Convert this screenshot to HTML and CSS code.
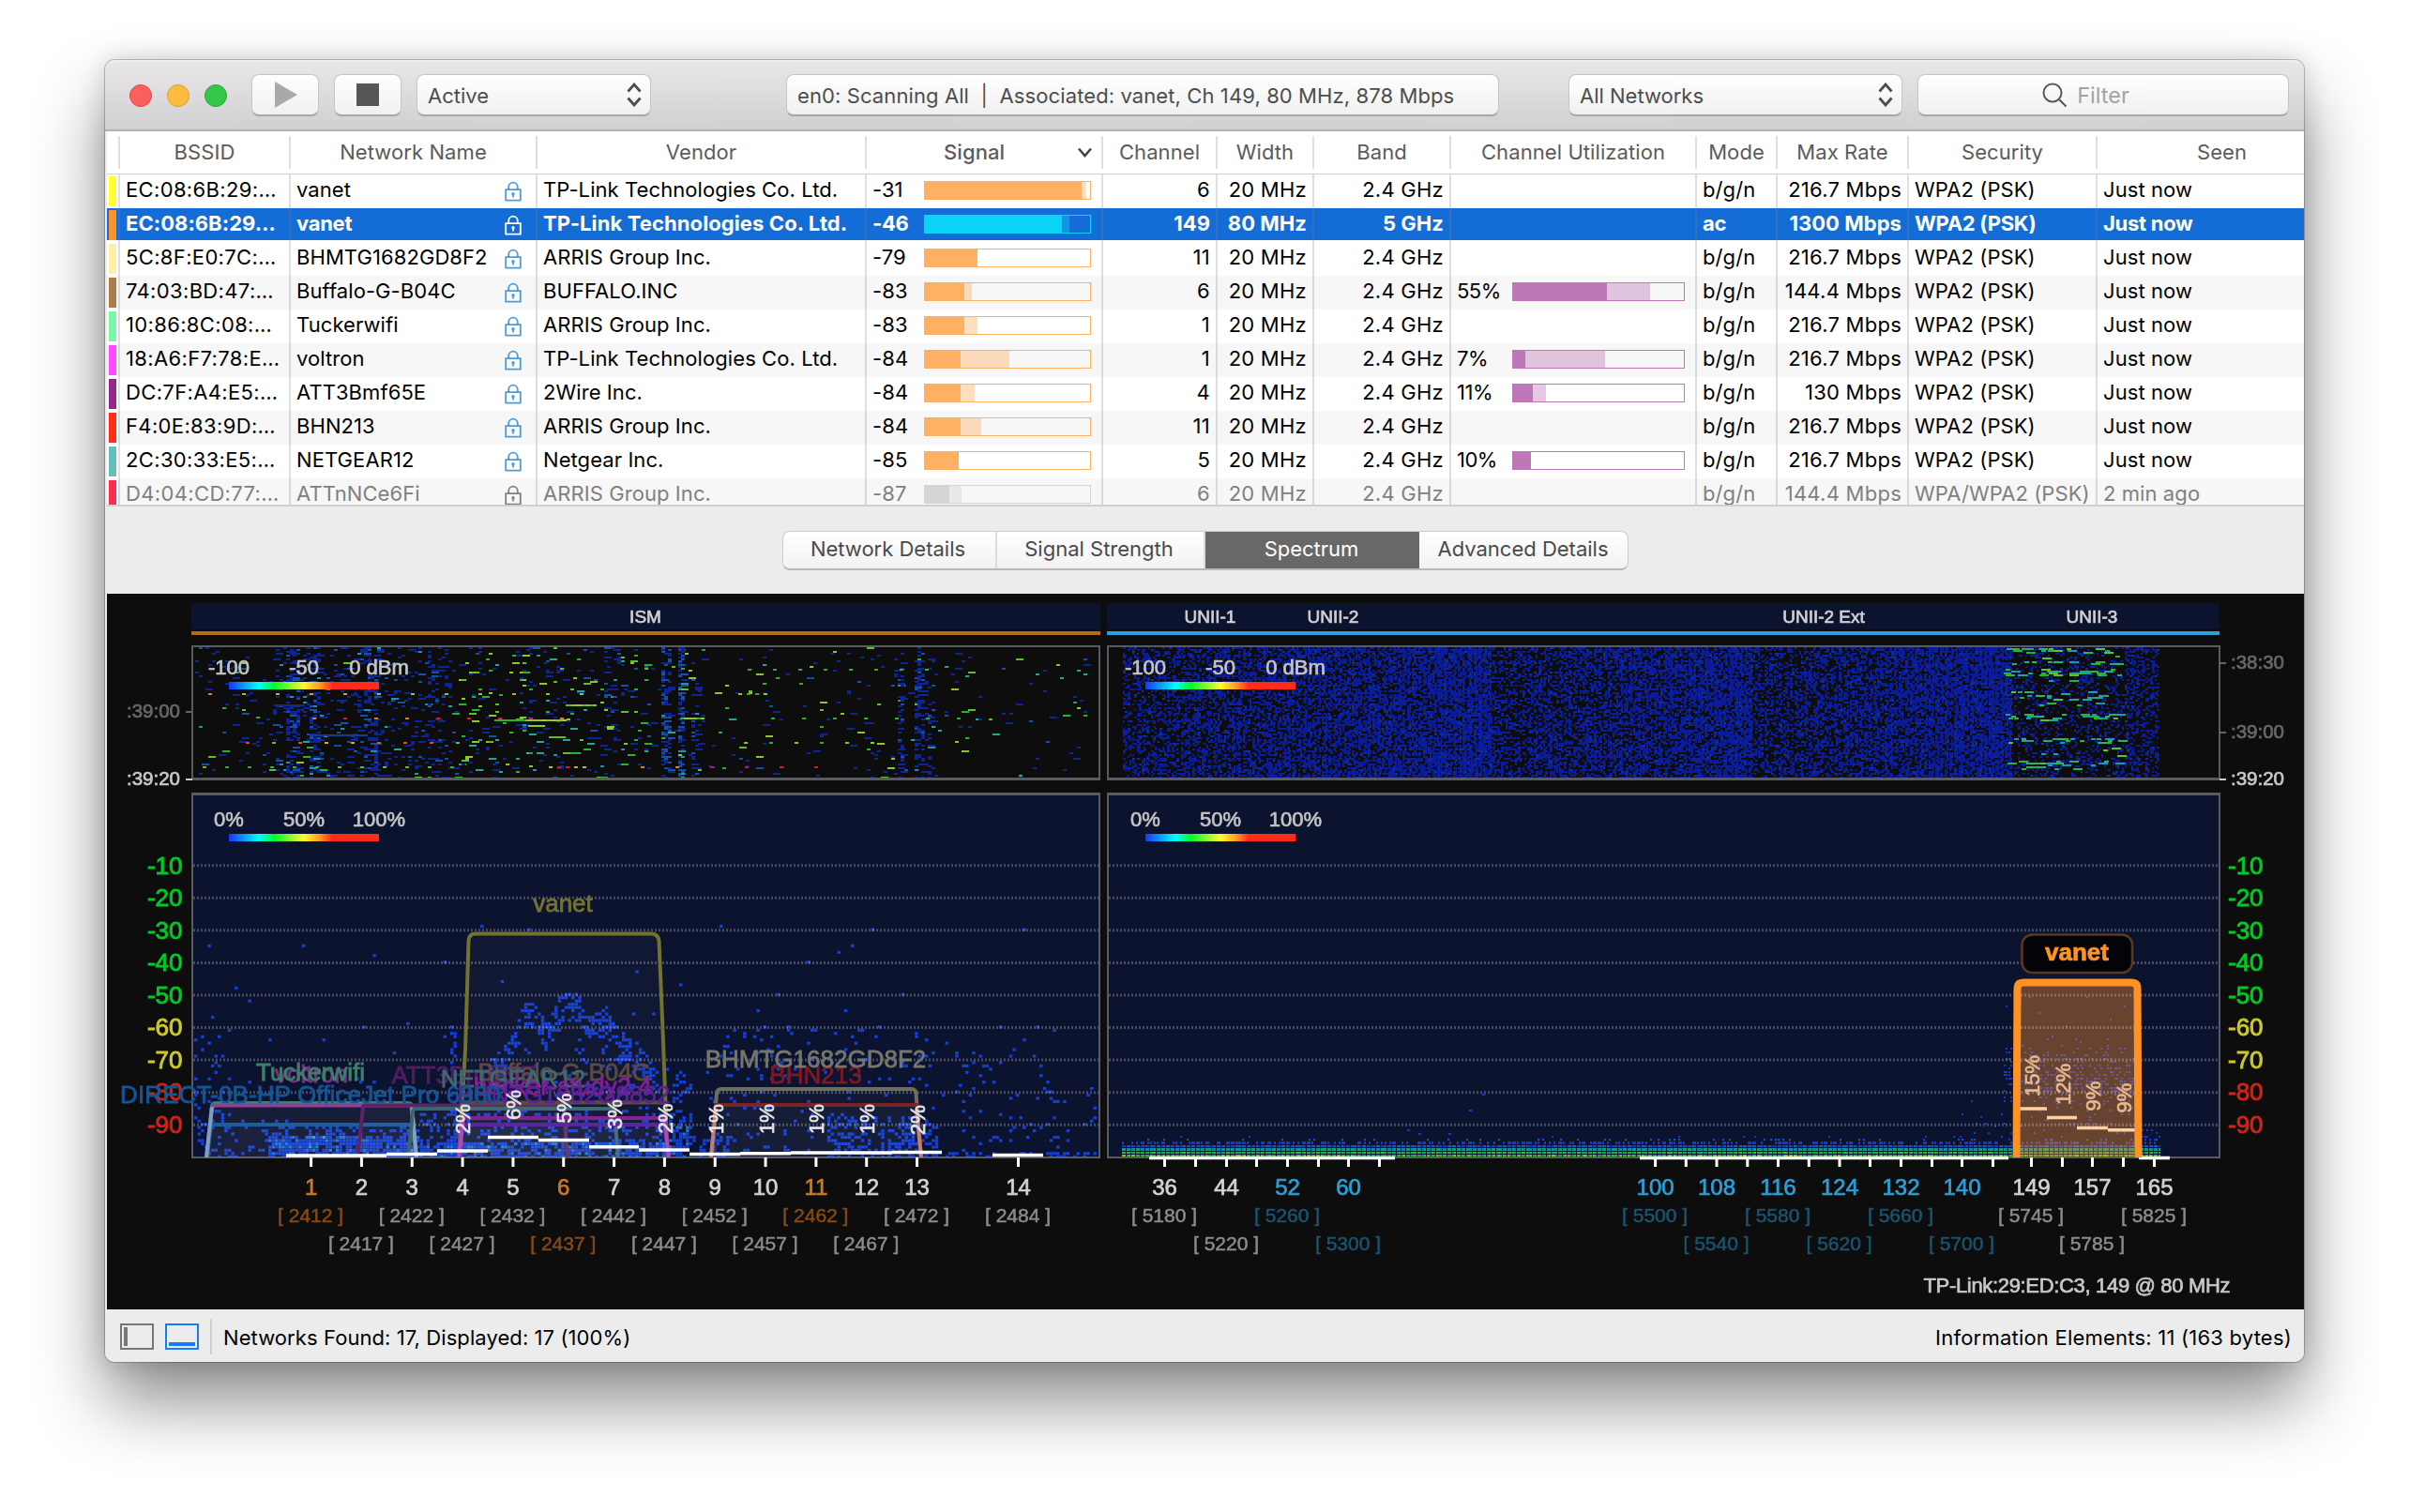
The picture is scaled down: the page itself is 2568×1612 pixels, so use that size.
FILE: index.html
```html
<!DOCTYPE html>
<html lang="en">
<head>
<meta charset="utf-8">
<title>Wi-Fi Scanner</title>
<link rel="stylesheet" href="styles.css">
</head>
<body>
<svg class="defs" width="0" height="0" aria-hidden="true">
  <symbol id="lock" viewBox="0 0 18 22"><path d="M4.2 9V6.5a4.8 4.8 0 0 1 9.6 0V9M1.2 9.2h15.6v11.4H1.2zM9 13v4.6" fill="none" stroke="currentColor" stroke-width="1.8"/><circle cx="9" cy="13.8" r="1.7" fill="currentColor"/></symbol>
  <symbol id="updown" viewBox="0 0 16 26"><path d="M1.5 9.5 8 2l6.500 7.500M1.500 16.500 8 24l6.500-7.500" fill="none" stroke="currentColor" stroke-width="2.800"/></symbol>
</svg>
<main class="window">
  <header class="toolbar">
    <div class="lights"><i class="red"></i><i class="amber"></i><i class="green"></i></div>
    <button class="ctl ctl-play"><svg width="24" height="28"><path d="M0 0 24 14 0 28z" fill="#a9a9a9"/></svg></button>
    <button class="ctl ctl-stop"><svg width="24" height="24"><path d="M0 0h24v24H0z" fill="#565656"/></svg></button>
    <div class="ctl popup popup-active"><span>Active</span><svg width="16" height="26"><use href="#updown"/></svg></div>
    <div class="ctl info"><span>en0: Scanning All&nbsp; |&nbsp; Associated: vanet, Ch 149, 80 MHz, 878 Mbps</span></div>
    <div class="ctl popup popup-net"><span>All Networks</span><svg width="16" height="26"><use href="#updown"/></svg></div>
    <div class="ctl search"><svg width="27" height="27"><circle cx="11" cy="11" r="9.500" fill="none" stroke="#5a5a5a" stroke-width="2"/><path d="m18 18 7.500 7.500" stroke="#5a5a5a" stroke-width="2.200"/></svg><span>Filter</span></div>
  </header>

  <section class="table">
    <div class="row head">
      <span></span><span>BSSID</span><span>Network Name</span><span>Vendor</span>
      <span class="sorted">Signal<svg width="15" height="11"><path d="M1 1.500 7.500 9 14 1.500" fill="none" stroke="#444" stroke-width="2.600"/></svg></span>
      <span>Channel</span><span>Width</span><span>Band</span><span>Channel Utilization</span><span>Mode</span><span>Max Rate</span><span>Security</span><span class="seen">Seen</span>
    </div>
    <div class="rows">
      <div class="row"><span class="sw"><i style="background:#ffff2e"></i></span><span class="mac">EC:08:6B:29:…</span><span class="name">vanet<svg><use href="#lock"/></svg></span><span>TP-Link Technologies Co. Ltd.</span><span class="sig">-31<b class="bar"><i style="width:98%"></i><u style="width:95%"></u></b></span><span class="r">6</span><span class="r">20 MHz</span><span class="r">2.4 GHz</span><span></span><span>b/g/n</span><span class="r">216.7 Mbps</span><span>WPA2 (PSK)</span><span>Just now</span></div>
      <div class="row sel"><span class="sw"><i style="background:#ff9224"></i></span><span class="mac">EC:08:6B:29…</span><span class="name">vanet<svg><use href="#lock"/></svg></span><span class="vendor">TP-Link Technologies Co. Ltd.</span><span class="sig">-46<b class="bar"><i style="width:87.500%"></i><u style="width:83%"></u></b></span><span class="r">149</span><span class="r">80 MHz</span><span class="r">5 GHz</span><span></span><span>ac</span><span class="r">1300 Mbps</span><span>WPA2 (PSK)</span><span>Just now</span></div>
      <div class="row"><span class="sw"><i style="background:#fff0a8"></i></span><span class="mac">5C:8F:E0:7C:…</span><span class="name">BHMTG1682GD8F2<svg><use href="#lock"/></svg></span><span>ARRIS Group Inc.</span><span class="sig">-79<b class="bar"><u style="width:32%"></u></b></span><span class="r">11</span><span class="r">20 MHz</span><span class="r">2.4 GHz</span><span></span><span>b/g/n</span><span class="r">216.7 Mbps</span><span>WPA2 (PSK)</span><span>Just now</span></div>
      <div class="row alt"><span class="sw"><i style="background:#a97c4a"></i></span><span class="mac">74:03:BD:47:…</span><span class="name">Buffalo-G-B04C<svg><use href="#lock"/></svg></span><span>BUFFALO.INC</span><span class="sig">-83<b class="bar"><i style="width:28.500%"></i><u style="width:24%"></u></b></span><span class="r">6</span><span class="r">20 MHz</span><span class="r">2.4 GHz</span><span class="util">55%<b class="bar"><i style="width:80%"></i><u style="width:55%"></u></b></span><span>b/g/n</span><span class="r">144.4 Mbps</span><span>WPA2 (PSK)</span><span>Just now</span></div>
      <div class="row"><span class="sw"><i style="background:#7bf7a8"></i></span><span class="mac">10:86:8C:08:…</span><span class="name">Tuckerwifi<svg><use href="#lock"/></svg></span><span>ARRIS Group Inc.</span><span class="sig">-83<b class="bar"><i style="width:32%"></i><u style="width:24%"></u></b></span><span class="r">1</span><span class="r">20 MHz</span><span class="r">2.4 GHz</span><span></span><span>b/g/n</span><span class="r">216.7 Mbps</span><span>WPA2 (PSK)</span><span>Just now</span></div>
      <div class="row alt"><span class="sw"><i style="background:#ff4cff"></i></span><span class="mac">18:A6:F7:78:E…</span><span class="name">voltron<svg><use href="#lock"/></svg></span><span>TP-Link Technologies Co. Ltd.</span><span class="sig">-84<b class="bar"><i style="width:51%"></i><u style="width:21.800%"></u></b></span><span class="r">1</span><span class="r">20 MHz</span><span class="r">2.4 GHz</span><span class="util">7%<b class="bar"><i style="width:54%"></i><u style="width:7%"></u></b></span><span>b/g/n</span><span class="r">216.7 Mbps</span><span>WPA2 (PSK)</span><span>Just now</span></div>
      <div class="row"><span class="sw"><i style="background:#93268f"></i></span><span class="mac">DC:7F:A4:E5:…</span><span class="name">ATT3Bmf65E<svg><use href="#lock"/></svg></span><span>2Wire Inc.</span><span class="sig">-84<b class="bar"><i style="width:30%"></i><u style="width:21.800%"></u></b></span><span class="r">4</span><span class="r">20 MHz</span><span class="r">2.4 GHz</span><span class="util">11%<b class="bar"><i style="width:19%"></i><u style="width:11.500%"></u></b></span><span>b/g/n</span><span class="r">130 Mbps</span><span>WPA2 (PSK)</span><span>Just now</span></div>
      <div class="row alt"><span class="sw"><i style="background:#ff2d16"></i></span><span class="mac">F4:0E:83:9D:…</span><span class="name">BHN213<svg><use href="#lock"/></svg></span><span>ARRIS Group Inc.</span><span class="sig">-84<b class="bar"><i style="width:34%"></i><u style="width:21.800%"></u></b></span><span class="r">11</span><span class="r">20 MHz</span><span class="r">2.4 GHz</span><span></span><span>b/g/n</span><span class="r">216.7 Mbps</span><span>WPA2 (PSK)</span><span>Just now</span></div>
      <div class="row"><span class="sw"><i style="background:#65beb7"></i></span><span class="mac">2C:30:33:E5:…</span><span class="name">NETGEAR12<svg><use href="#lock"/></svg></span><span>Netgear Inc.</span><span class="sig">-85<b class="bar"><u style="width:20.600%"></u></b></span><span class="r">5</span><span class="r">20 MHz</span><span class="r">2.4 GHz</span><span class="util">10%<b class="bar"><u style="width:10.500%"></u></b></span><span>b/g/n</span><span class="r">216.7 Mbps</span><span>WPA2 (PSK)</span><span>Just now</span></div>
      <div class="row alt old"><span class="sw"><i style="background:#ff2c50"></i></span><span class="mac">D4:04:CD:77:…</span><span class="name">ATTnNCe6Fi<svg><use href="#lock"/></svg></span><span>ARRIS Group Inc.</span><span class="sig">-87<b class="bar"><i style="width:22%"></i><u style="width:15%"></u></b></span><span class="r">6</span><span class="r">20 MHz</span><span class="r">2.4 GHz</span><span></span><span>b/g/n</span><span class="r">144.4 Mbps</span><span>WPA/WPA2 (PSK)</span><span>2 min ago</span></div>
    </div>
  </section>

  <nav class="tabs"><div class="segments"><span>Network Details</span><span>Signal Strength</span><span class="on">Spectrum</span><span>Advanced Details</span></div></nav>

  <section class="chart">
    <canvas id="noise" width="2342" height="763"></canvas>
    <svg class="plot" id="plot" viewBox="114 633 2342 763" width="2342" height="763">
      <defs>
        <linearGradient id="heat"><stop offset="0" stop-color="#1437ff"/><stop offset=".2" stop-color="#00ffff"/><stop offset=".3" stop-color="#00fa30"/><stop offset=".5" stop-color="#fff92e"/><stop offset=".6" stop-color="#ff9f26"/><stop offset=".69" stop-color="#ff2a1a"/></linearGradient>
      </defs>
      <path d="M204 675H1173" stroke="#b5691c" stroke-width="4"/>
      <path d="M1180 675H2366" stroke="#2b9fd8" stroke-width="4"/>
      <g class="band"><text x="688" y="663.500">ISM</text><text x="1290" y="663.500">UNII-1</text><text x="1421" y="663.500">UNII-2</text><text x="1944" y="663.500">UNII-2 Ext</text><text x="2230" y="663.500">UNII-3</text></g>
      <g class="frame"><path d="M205 689H1172V830.500H205zM1181 689H2366V830.500H1181zM205 846.500H1172V1234H205zM1181 846.500H2366V1234H1181z"/><path d="M204 830.500H1173M1180 830.500H2367M204 846.500H1173M1180 846.500H2367" stroke-width="3"/></g>
      <g id="grid" class="grid"></g>

      <g class="legend">
        <text x="244" y="719">-100</text><text x="324" y="719">-50</text><text x="404" y="719">0 dBm</text>
        <text x="1221" y="719">-100</text><text x="1301" y="719">-50</text><text x="1381" y="719">0 dBm</text>
        <text x="244" y="881">0%</text><text x="324" y="881">50%</text><text x="404" y="881">100%</text>
        <text x="1221" y="881">0%</text><text x="1301" y="881">50%</text><text x="1381" y="881">100%</text>
        <rect x="244" y="727" width="160" height="8"/><rect x="1221" y="727" width="160" height="8"/>
        <rect x="244" y="889" width="160" height="8"/><rect x="1221" y="889" width="160" height="8"/>
      </g>
      <g class="time">
        <path d="M198 759h6M2366 707h7M2366 781h7" stroke="#666"/><path d="M198 831h7M2366 831h7" stroke="#ccc"/>
        <g class="e"><text x="192" y="765">:39:00</text><text class="now" x="192" y="837">:39:20</text></g>
        <text x="2378" y="713">:38:30</text><text x="2378" y="787">:39:00</text><text class="now" x="2378" y="837">:39:20</text>
      </g>
      <g id="dbm" class="dbm"></g>

      <g class="ap">
        <path d="M221 1234 226 1180Q226 1176 230 1176H435Q439 1176 439 1180L444 1234" stroke="#3f8068"/>
        <path d="M220 1234 225.500 1182Q226 1178.500 230 1178.500H435Q439 1178.500 439 1182L443 1234" stroke="#8f3f9a"/>
        <path d="M220 1234 225 1201Q225 1199 230 1199H435Q439 1199 440 1201L444 1234" stroke="#1d5f9e"/>
        <path d="M220 1234 226 1180M444 1234 439 1180" stroke="#7d9fc0" stroke-width="3"/>
        <path d="M381 1234 387 1180Q387 1178.500 390 1178.500H598Q601 1178.500 601 1182L605 1234" stroke="#5c2467"/>
        <path d="M435 1234 440 1186Q440 1182 444 1182H651Q655 1182 655 1186L659 1234" stroke="#3b6570"/>
        <path d="M492 1175.500H712" stroke="#5a4a35"/>
        <path d="M489 1234 496 1120 499.500 1003Q500 995.500 507 995.500H694Q701.500 995.500 702.500 1003L707 1110 711.500 1234" stroke="#74722f"/>
        <path d="M489 1234 493 1196Q493 1192 497 1192H704Q708 1192 709 1196L713 1234" stroke="#832391"/>
        <path d="M489 1234 493 1203Q493 1199 497 1199H704Q708 1199 709 1203L713 1234" stroke="#5c259f"/>
        <path d="M489 1234 494 1192M713 1234 708 1192" stroke="#b047c0"/>
        <path d="M758 1234 764 1166Q764.500 1161 769 1161H972Q976 1161 976.500 1166L982 1234" stroke="#6c6e60"/>
        <path d="M758 1234 763 1178H977L982 1234" stroke="#7c2328"/>
        <path d="M758 1234 763 1182M982 1234 977 1182" stroke="#c08070"/>
      </g>
      <g class="ssid">
        <text x="600" y="972" color="#75732f">vanet</text>
        <text x="332" y="1154" color="#7a2f88">voltron</text>
        <text x="331" y="1151.500" color="#3f8068">Tuckerwifi</text>
        <text x="494.500" y="1154.500" color="#521e63">ATT3Bmf65E</text>
        <text x="601" y="1151.500" color="#5e4a42">Buffalo-G-B04C</text>
        <text x="547" y="1159" color="#3f6a70">NETGEAR12</text>
        <text x="600" y="1167" color="#8a1c93" textLength="190">hecker-study2.4</text>
        <text x="601" y="1176" color="#5a2399">BHNTG1682G8852</text>
        <text x="331" y="1175.500" color="#155596" textLength="406">DIRECT-0B-HP OfficeJet Pro 6960</text>
        <text x="869.500" y="1155" color="#7c1a22">BHN213</text>
        <text x="869.500" y="1137.500" color="#76776c">BHMTG1682GD8F2</text>
      </g>
      <g class="use"><path d="M305 1232H412M412 1230.500H466M466 1227H520M520 1212.500H574M574 1215.500H628M628 1222.800H681M681 1226H735M735 1230.500H789M789 1229.700H843M843 1229H951M951 1228.500H1004M1058 1231.500H1112M1225 1234.500H1487M1748 1234.500H2141M2280 1234.500H2313"/></g>
      <g class="pct">
        <text transform="translate(501 1209) rotate(-90)">2%</text><text transform="translate(555 1194) rotate(-90)">6%</text><text transform="translate(609 1197.500) rotate(-90)">5%</text><text transform="translate(662.500 1204) rotate(-90)">3%</text><text transform="translate(716.500 1208.500) rotate(-90)">2%</text><text transform="translate(770.500 1209) rotate(-90)">1%</text><text transform="translate(824.500 1209) rotate(-90)">1%</text><text transform="translate(878 1209) rotate(-90)">1%</text><text transform="translate(932 1209) rotate(-90)">1%</text><text transform="translate(986 1210) rotate(-90)">2%</text>
        <g class="hot"><text transform="translate(2173.500 1169) rotate(-90)">15%</text><text transform="translate(2206.500 1178) rotate(-90)">12%</text><text transform="translate(2239 1184.500) rotate(-90)">9%</text><text transform="translate(2272 1186.500) rotate(-90)">9%</text></g>
      </g>
      <path d="M2153 1182H2182M2182 1191.500H2214M2214 1202.500H2247M2247 1204.700H2276" stroke="#ffd0a2" stroke-width="3.500"/>
      <path d="M2149.500 1234 2150.500 1054Q2150.500 1047.500 2157 1047.500H2272Q2278.500 1047.500 2278.500 1054L2279.500 1234" fill="none" stroke="#ff9224" stroke-width="8"/>
      <rect x="2155.500" y="996.500" width="117.500" height="40.500" rx="11" fill="#03040a" stroke="#5c381c" stroke-width="2.500"/>
      <text class="badge" x="2214" y="1024">vanet</text>
      <g id="axis" class="axis"></g>
      <text class="foot" x="2377.500" y="1378" textLength="327">TP-Link:29:ED:C3, 149 @ 80 MHz</text>
    </svg>
  </section>

  <footer class="status">
    <svg width="36" height="28"><rect x="1" y="1" width="34" height="26" fill="none" stroke="#777" stroke-width="2"/><path d="M4 4h4v20H4z" fill="#777"/></svg>
    <svg width="36" height="28"><rect x="1" y="1" width="34" height="26" fill="none" stroke="#147bff" stroke-width="2"/><path d="M4 20h28v4H4z" fill="#147bff"/></svg>
    <i class="rule"></i>
    <span class="found">Networks Found: 17, Displayed: 17 (100%)</span>
    <span class="elements">Information Elements: 11 (163 bytes)</span>
  </footer>
</main>
<script src="chart.js"></script>
</body>
</html>
```

FILE: styles.css
```css
* { box-sizing: border-box; }
html, body { margin: 0; background: #fff; }
body { height: 1612px; overflow: hidden; padding: 64px 112px; font: 22px/1 Inter, "Liberation Sans", sans-serif; color: #000; }
.defs { position: absolute; }
.window { width: 2344px; height: 1388px; border-radius: 10px; overflow: hidden; background: #ececec; display: flex; flex-direction: column;
  box-shadow: 0 0 0 1px rgba(0,0,0,.22), 0 0 26px rgba(0,0,0,.16), 0 42px 76px rgba(0,0,0,.46); }

.toolbar { height: 76px; flex: none; display: flex; align-items: flex-start; padding-top: 15px; background: linear-gradient(#f4f3f4 0, #e8e6e8 3px, #d1cfd1 100%); border-bottom: 2px solid #b3b1b3; color: #4d4d4d; }
.lights { display: flex; gap: 16px; width: 156px; padding: 11px 0 0 26px; }
.lights i { width: 24px; height: 24px; border-radius: 50%; }
.red { background: #fc605c; border: 1px solid #e0443e; }
.amber { background: #fdbc40; border: 1px solid #dfa023; }
.green { background: #34c84a; border: 1px solid #1daa30; }
.ctl { height: 45px; border-radius: 8px; border: 1px solid #c6c4c6; border-bottom: 2px solid #a8a6a8; background: linear-gradient(#fff, #f0f0f0); display: flex; align-items: center; justify-content: center; padding: 0; color: inherit; font: inherit; white-space: pre; }
.ctl span { padding-top: 2px; }
.ctl-play { width: 72px; margin-right: 16px; padding-left: 2px; }
.ctl-stop { width: 72px; margin-right: 16px; }
.popup { justify-content: space-between; padding: 0 9px 0 11px; }
.popup-active { width: 250px; margin-right: 144px; }
.info { width: 760px; margin-right: 74px; justify-content: flex-start; padding-left: 11px; letter-spacing: .1px; }
.popup-net { width: 356px; margin-right: 16px; }
.search { width: 396px; gap: 10px; color: #a3a3a3; font-size: 23.500px; padding-right: 37px; }

.table { height: 400px; flex: none; margin-left: 2px; background: #fff; overflow: hidden; border-bottom: 2px solid #cfcfcf; }
.row { display: grid; grid-template-columns: 14px 182px 263px 351px 252px 122px 103px 146px 262px 86px 140px 201px 1fr; height: 36px; background: #fff; }
.row > span { border-right: 2px solid rgba(130,130,130,.26); line-height: 33px; padding: 0 6px; white-space: nowrap; overflow: hidden; letter-spacing: .08px; }
.row > span:last-child { border-right: 0; }
.row > .mac { letter-spacing: .35px; padding-right: 0; }
.row.alt { background: #f7f7f7; }
.row.head { height: 46px; color: #5b5b5b; background: #fff; border-bottom: 1px solid #cfcfcf; padding: 5px 0; }
.row.head > span { text-align: center; padding: 0; line-height: 35px; }
.row.head .sorted { font-weight: 500; display: flex; align-items: center; padding: 0 10px 0 82px; justify-content: space-between; }
.row.head .seen { padding-left: 45px; }
.row .sw { padding: 2px 0 2px 2px; }
.sw i { display: block; width: 8px; height: 32px; }
.name { display: flex; justify-content: space-between; }
.name svg { width: 18px; height: 22px; margin: 7px 9px 0 0; color: #509bd5; }
.row .r { text-align: right; letter-spacing: .25px; }
.sig, .util { display: flex; justify-content: space-between; }
.row .util { letter-spacing: -.5px; }
.bar { --c: 255,176,98; width: 178px; height: 20px; margin: 7px 5px 0 0; border: 1px solid rgb(var(--c)); display: grid; }
.util .bar { --c: 190,120,186; width: 184px; border-width: 1.500px; }
.bar i, .bar u { grid-area: 1 / 1; height: 100%; background: rgba(var(--c), .4); }
.bar u { background: rgb(var(--c)); }
.row.sel { background: linear-gradient(#146dd6 0 34px, #fff 34px); color: #fff; font-weight: 700; }
.row.sel .name svg { color: #fff; }
.row.sel > span { letter-spacing: -.28px; }
.row.sel > .vendor { letter-spacing: .1px; }
.row.sel > .mac, .row.sel > .r { letter-spacing: .05px; }
.row.sel .bar { --c: 11,211,245; }
.row.old { color: #808080; }
.old .name svg { color: #808080; }
.row.old .bar { --c: 213,213,213; }

.tabs { flex: none; height: 93px; padding: 26px 0 0 722px; color: #4a4a4a; }
.segments { display: grid; grid-template-columns: 228px 222px 228px 224px; width: 902px; height: 42px; border: 1px solid #cdcdcd; border-bottom: 2px solid #b8b8b8; border-radius: 8px; overflow: hidden; background: linear-gradient(#fff, #f2f2f2); }
.segments span { line-height: 37px; text-align: center; border-right: 2px solid #dcdcdc; padding-right: 3px; }
.segments span:last-child { border: 0; }
.segments .on { background: #686868; color: #fff; border-color: #686868; margin: -1px 0 -2px; line-height: 39px; padding: 0; }

.chart { position: relative; flex: none; height: 763px; margin-left: 2px; background: #0d0d0d; }
.chart canvas, .plot { position: absolute; left: 0; top: 0; display: block; }
.plot text { font-family: "Liberation Sans", Arial, sans-serif; text-anchor: middle; stroke-width: .7px; }
.plot .band text { font-size: 19px; fill: #cfcfcf; stroke: #cfcfcf; }
.frame { fill: none; stroke: #5a5b60; stroke-width: 2; }
.grid { stroke: #fff; stroke-opacity: .24; stroke-width: 3; stroke-dasharray: 2 2; }
.plot .legend text { font-size: 22px; fill: #c4c4c4; stroke: #c4c4c4; }
.legend rect { fill: url(#heat); }
.plot .time text { font-size: 20.500px; fill: #686868; stroke: #686868; text-anchor: start; }
.plot .time .e text { text-anchor: end; }
.plot .time text.now { fill: #c8c8c8; stroke: #c8c8c8; }
.time path { stroke-width: 2; }
.plot .dbm text { font-size: 26px; stroke: currentColor; fill: currentColor; stroke-width: .9px; }
.plot .dbm .l { text-anchor: end; }
.plot .dbm .rt { text-anchor: start; }
.ap path { fill: #fff; fill-opacity: .025; stroke-width: 4; }
.plot .ssid text { font-size: 26px; fill: currentColor; stroke: currentColor; stroke-width: .8px; }
.use path { stroke: #fff; stroke-width: 3.500; fill: none; }
.plot .pct text { font-size: 22px; fill: #e4e4e4; stroke: #e4e4e4; text-anchor: start; }
.plot .pct .hot text { fill: #e6b98e; stroke: #e6b98e; }
.plot .badge { font-size: 26px; font-weight: 700; fill: #ff9224; stroke: #ff9224; }
.plot .axis text { font-size: 24px; fill: currentColor; stroke: currentColor; }
.plot .axis text.f { font-size: 21px; stroke-width: .5px; }
.axis path { stroke: #fff; stroke-width: 3; }
.plot .foot { font-size: 22px; fill: #c8c8c8; stroke: #c8c8c8; text-anchor: end; }

.status { flex: 1; display: flex; align-items: center; padding: 2px 13px 0 16px; background: #ececec; }
.status svg { margin-right: 12px; }
.rule { width: 2px; height: 38px; background: #d0d0d0; margin-right: 12px; }
.elements { margin-left: auto; }
.status span { letter-spacing: .08px; padding-top: 2px; }
.status .elements { letter-spacing: .22px; }
```

FILE: chart.js
```js
(function () {
  var OX = 114, OY = 633;
  var ns = 'http://www.w3.org/2000/svg';

  function add(parent, tag, attrs, text) {
    var el = document.createElementNS(ns, tag);
    for (var k in attrs) el.setAttribute(k, attrs[k]);
    if (text !== undefined) el.textContent = text;
    parent.appendChild(el);
  }

  // Amplitude grid and its labels
  var grid = document.getElementById('grid'), dbm = document.getElementById('dbm');
  for (var n = 1; n <= 9; n++) {
    var gy = 922.7 + (n - 1) * 34.57;
    add(grid, 'path', { d: 'M206 ' + gy + 'H1171M1182 ' + gy + 'H2365' });
    var c = n < 6 ? '#00c927' : n < 8 ? '#cdc92b' : '#cf2418';
    add(dbm, 'text', { x: 194.5, y: gy + 8.8, 'class': 'l', color: c }, '-' + n * 10);
    add(dbm, 'text', { x: 2375, y: gy + 8.8, 'class': 'rt', color: c }, '-' + n * 10);
  }

  // Channel axis: [channel, frequency, x, colour, frequency row]
  var axis = document.getElementById('axis');
  var white = ['#d2d2d2', '#8c8c8c'], orange = ['#d07a1e', '#874a14'], blue = ['#2b9fd8', '#1b5470'];
  var channels = [];
  for (n = 1; n <= 13; n++) channels.push([n, 2407 + n * 5, 331.6 + (n - 1) * 53.83, n % 5 === 1 ? orange : white, (n + 1) % 2]);
  channels.push([14, 2484, 1085.5, white, 0]);
  [[36, 5180, 1241.5], [44, 5220, 1307.5], [52, 5260, 1372.5], [60, 5300, 1437.5], [100, 5500, 1764.6], [108, 5540, 1830], [116, 5580, 1895.5], [124, 5620, 1961], [132, 5660, 2026.5], [140, 5700, 2091.5], [149, 5745, 2165.5], [157, 5785, 2230.5], [165, 5825, 2296.5]].forEach(function (a, i) {
    channels.push([a[0], a[1], a[2], a[0] >= 52 && a[0] <= 140 ? blue : white, i % 2]);
  });
  channels.forEach(function (ch) {
    add(axis, 'path', { d: 'M' + ch[2] + ' 1234V1244' });
    add(axis, 'text', { x: ch[2], y: 1274, color: ch[3][0] }, String(ch[0]));
    add(axis, 'text', { x: ch[2] - 0.5, y: ch[4] ? 1333 : 1303, color: ch[3][1], 'class': 'f' }, '[ ' + ch[1] + ' ]');
  });
  [1274.5, 1339.5, 1405.5, 1470.5, 1797.3, 1862.8, 1928.3, 1993.5, 2059.5, 2124.5, 2198.5, 2263.5].forEach(function (x) {
    add(axis, 'path', { d: 'M' + x + ' 1234V1244' });
  });

  // Panels and signal samples
  var g = document.getElementById('noise').getContext('2d');
  g.translate(-OX, -OY);
  var seed = 7919;
  function rnd() { seed = (seed * 1664525 + 1013904223) % 4294967296; return seed / 4294967296; }
  function box(x, y, w, h, c) { g.fillStyle = c; g.fillRect(Math.round(x), Math.round(y), w, h); }
  function pick(a) { return a[Math.floor(rnd() * a.length)]; }

  box(204, 643, 969, 28, '#0c132f'); box(1180, 643, 1186, 28, '#0c132f');
  box(205, 846, 967, 388, '#0c132f'); box(1181, 846, 1185, 388, '#0c132f');

  // 2.4 GHz waterfall
  var x, y, p, i;
  for (y = 690; y < 830; y += 2) {
    for (x = 208; x < 1160; x += 3.6) {
      p = 0.03;
      if (x > 290 && x < 480) p = 0.12;
      if (x > 305 && x < 318 || x > 328 && x < 338) p = 0.38;
      if (x > 385 && x < 400) p = 0.38;
      if (x > 480 && x < 640) p = 0.04;
      if (x > 640 && x < 660) p = 0.12;
      if (x > 704 && x < 713 || x > 720 && x < 727) p = 0.46;
      if (x > 735 && x < 742) p = 0.16;
      if (x > 745 && x < 950) p = 0.014;
      if (x > 956 && x < 964 || x > 988 && x < 994) p = 0.2;
      if (x > 973 && x < 983) p = 0.4;
      if (x > 1000) p = 0.012;
      if (rnd() < p) {
        box(x, y, rnd() < 0.2 ? 8 : 4, 2, rnd() < (p > 0.4 ? 0.4 : 0.14) ? '#1450a8' : rnd() < 0.04 ? '#1c93a8' : '#0d2496');
      }
      if (rnd() < (x > 480 && x < 690 ? 0.028 : x < 480 ? 0.004 : 0.006)) box(x, y, rnd() < 0.4 ? 8 : 4, 2, pick(['#28b428', '#8cc828', '#20a890', '#5abf28']));
    }
  }
  function streak(y, x0, x1, step, cols, w) { for (x = x0; x < x1; x += step) box(x, y, w || 4, 2, pick(cols)); }
  streak(767, 527, 560, 3.6, ['#28b428']); streak(767, 560, 600, 3.6, ['#b8c828', '#8cc828']);
  streak(773, 563, 580, 3.6, ['#8cc828']); streak(751, 603, 634, 3.6, ['#8cc828', '#5abf28']);
  streak(785, 585, 600, 3.6, ['#5abf28']); streak(765, 333, 600, 33, ['#e0142c', '#e0142c', '#d88020']);
  streak(739, 222, 640, 36, ['#d88020', '#c8a828', '#8cc828']); streak(791, 262, 500, 28, ['#e05020', '#c8b428', '#5abf28']);
  streak(817, 216, 500, 24, ['#5abf28', '#28b428']); streak(817, 585, 625, 9, ['#e0142c', '#c8b428']);
  streak(751, 292, 322, 3.6, ['#0d2a8c']); streak(783, 330, 388, 3.6, ['#123c96']);
  streak(713, 797, 1000, 27, ['#28b428']); streak(739, 787, 822, 9, ['#28b428', '#8cc828']); streak(858, 683, 683, 37, ['#e0142c']);
  streak(817, 683, 870, 37, ['#e0142c', '#e08020']);
  streak(791, 793, 930, 27, ['#28b428', '#8cc828']); streak(765, 822, 1030, 33, ['#28b428']);
  streak(765, 725, 747, 3.6, ['#28b428', '#8cc828']);

  // 5 GHz waterfall
  for (y = 690; y < 830; y += 2) {
    for (x = 1197; x < 2301; x += 2.46) {
      if (x < 1590) p = 0.4 + 0.38 * (x - 1197) / 393;
      else if (x < 1867) p = 0.4 + 0.36 * (x - 1590) / 277;
      else if (x < 2143) p = 0.4 + 0.42 * (x - 1867) / 276;
      else p = x < 2264 ? 0.26 : 0.38;
      if (rnd() < p) box(x, y, 2 + (rnd() < 0.6), 2, rnd() < 0.1 ? '#102c98' : '#0a1c9c');
    }
  }
  [[691, .5], [693, .4], [699, .2], [705, .7], [713, .3], [715, .7], [717, .7], [719, .4], [725, .2], [737, .3], [741, .5], [743, .6], [749, .2], [761, .4], [763, .7], [765, .6], [769, .1], [787, .6], [789, .6], [797, .2], [803, .15], [811, .5], [813, .6], [817, .2], [825, .08]].forEach(function (s) {
    for (x = 2138; x < 2258; x += 7.4) if (rnd() < s[1] * 0.85) box(x + rnd() * 6 - 3, s[0] + (rnd() < 0.3 ? 2 : 0), rnd() < 0.5 ? 5 : 10, 2, pick(['#28b432', '#1ca88c', '#1c98a8', '#28b45a', '#60c028']));
  });

  // 2.4 GHz spectrum
  var hump = [[520, 1130], [533, 1118], [545, 1100], [558, 1068], [570, 1066], [582, 1092], [596, 1058], [612, 1056], [630, 1080], [645, 1072], [660, 1096], [680, 1112], [700, 1140]];
  function top(x) {
    for (i = 1; i < hump.length; i++) if (x < hump[i][0]) return hump[i - 1][1] + (hump[i][1] - hump[i - 1][1]) * (x - hump[i - 1][0]) / (hump[i][0] - hump[i - 1][0]);
    return 1234;
  }
  for (x = 207; x < 1168; x += 3.59) {
    for (y = 986; y < 1232; y += 3.46) {
      p = x < 520 || x > 700 ? 0.005 : 0.002;
      if (x > 950 && y < 1090) p = 0.001;
      if (x < 245 && y > 1095) p = 0.1;
      if (x > 750 && x < 1110 && y > 1090) p = 0.045;
      if (x >= 1110 && y > 1150) p = 0.05;
      if (x > 479 && x < 487 && y > 1090) p = 0.4;
      if (x > 520 && x < 700 && y > top(x)) p = y < top(x) + 30 ? 0.5 : 0.08;
      if (x < 310 && y > 1190) p = 0.16;
      if (x >= 285 && x < 444 && y > 1195) p = y > 1209 ? 0.85 : 0.35;
      if (x > 444 && x < 715 && y > 1185) p = y > 1216 ? 0.72 : 0.3;
      if (x > 713 && x < 735 && y > 1140) p = y > 1185 ? 0.6 : 0.2;
      if (x > 735 && x < 780 && y > 1210) p = 0.4;
      if (x > 880 && x < 998 && y > 1188) p = 0.38;
      if (x > 1000 && y > 1228) p = 0.4;
      if (rnd() < p) {
        var col = rnd() < 0.2 && y > 1195 && p > 0.5 ? '#1d70d8' : rnd() < 0.02 && p > 0.5 ? '#10a8d8' : '#1440d8';
        g.fillStyle = col;
        g.fillRect(x, y, 3.4, 3.2);
      }
    }
  }

  // 5 GHz spectrum
  for (x = 1196; x < 2301; x += 2.46) {
    if (rnd() < 0.03) box(x, 1211, 2, 2, '#1437d0');
    if (rnd() < 0.1) box(x, 1214, 2, 2, '#1450d0');
    if (rnd() < 0.6) box(x, 1217, 2, 3, '#1437d0');
    box(x, 1221, 2, 2, pick(['#1450c8', '#1460c0', '#1437c8']));
    box(x, 1224, 2, 3, pick(['#12909c', '#1280b0', '#10a070']));
    box(x, 1228, 2, 2, pick(['#10b450', '#12a060', '#40b828', '#10b030']));
    box(x, 1231, 2, 3, pick(['#20b030', '#40b828', '#10a060', '#90b820']));
    if (x > 2080) {
      var near = x > 2130 ? 1 : (x - 2080) / 90;
      for (y = 1062; y < 1215; y += 3.46) {
        p = x > 2135 ? 0.04 + 0.42 * Math.exp(-Math.pow((y - 1150) / 26, 2)) : 0.10 * near * (y > 1180 ? 1 : 0.1);
        if (x > 2278) p = y > 1200 ? 0.2 : 0;
        if (y < 1100) p *= 0.5;
        if (rnd() < p) box(x, y, 2, 2, '#1437d0');
      }
    }
  }
  [[1580, 1166], [1566, 1183], [1500, 1204], [1512, 1208], [1544, 1208]].forEach(function (q) { box(q[0], q[1], 3, 2, '#1437d0'); });

  // Translucent body of the selected network
  g.fillStyle = 'rgba(255,146,50,.38)';
  g.beginPath(); g.moveTo(2150, 1234); g.lineTo(2151, 1048); g.lineTo(2278, 1048); g.lineTo(2279, 1234); g.fill();
})();
```
